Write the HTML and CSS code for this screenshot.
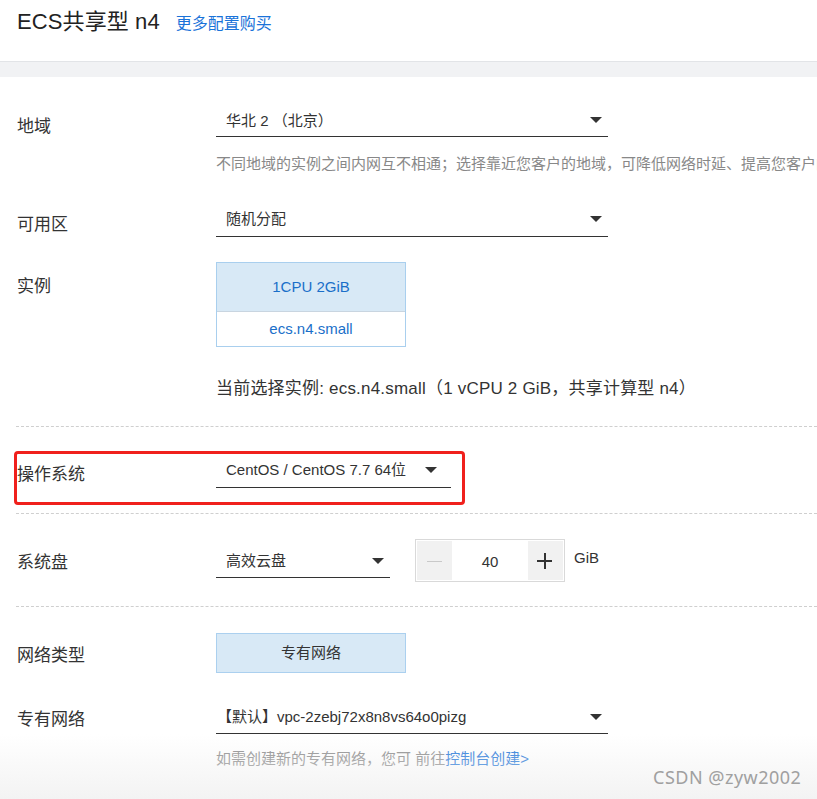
FILE: index.html
```html
<!DOCTYPE html>
<html lang="zh-CN">
<head>
<meta charset="utf-8">
<title>ECS共享型 n4</title>
<link rel="stylesheet" href="styles.css">
</head>
<body>
<div class="header">
  <h1 class="title">ECS共享型 n4</h1>
  <a class="more-link" href="#">更多配置购买</a>
</div>
<div class="band"></div>

<div class="form">
  <div class="row row-region">
    <div class="label">地域</div>
    <div class="field">
      <div class="select select-wide"><span>华北 2 （北京）</span><i class="caret"></i></div>
      <div class="hint">不同地域的实例之间内网互不相通；选择靠近您客户的地域，可降低网络时延、提高您客户的访问速度。</div>
    </div>
  </div>

  <div class="row row-zone">
    <div class="label label-zone">可用区</div>
    <div class="field">
      <div class="select select-wide select-zone"><span>随机分配</span><i class="caret"></i></div>
    </div>
  </div>

  <div class="row row-instance">
    <div class="label label-instance">实例</div>
    <div class="field">
      <div class="spec-card">
        <div class="spec-top">1CPU 2GiB</div>
        <div class="spec-bottom">ecs.n4.small</div>
      </div>
      <div class="current">当前选择实例: ecs.n4.small（1 vCPU 2 GiB，共享计算型 n4）</div>
    </div>
  </div>

  <div class="divider div-1"></div>

  <div class="row row-os">
    <div class="label label-os">操作系统</div>
    <div class="field">
      <div class="select select-os"><span>CentOS / CentOS 7.7 64位</span><i class="caret"></i></div>
    </div>
    <div class="highlight"></div>
  </div>

  <div class="divider div-2"></div>

  <div class="row row-disk">
    <div class="label label-disk">系统盘</div>
    <div class="field field-inline">
      <div class="select select-disk"><span>高效云盘</span><i class="caret"></i></div>
      <div class="stepper">
        <span class="step step-minus"><i class="minus-bar"></i></span>
        <span class="step-value">40</span>
        <span class="step step-plus"><i class="plus-h"></i><i class="plus-v"></i></span>
      </div>
      <span class="unit">GiB</span>
    </div>
  </div>

  <div class="divider div-3"></div>

  <div class="row row-nettype">
    <div class="label label-nettype">网络类型</div>
    <div class="field">
      <div class="net-btn">专有网络</div>
    </div>
  </div>

  <div class="row row-vpc">
    <div class="label label-vpc">专有网络</div>
    <div class="field">
      <div class="select select-wide select-vpc"><span>【默认】vpc-2zebj72x8n8vs64o0pizg</span><i class="caret"></i></div>
      <div class="hint hint-vpc">如需创建新的专有网络，您可 前往<a href="#" class="console-link">控制台创建&gt;</a></div>
    </div>
  </div>
</div>

<div class="fade"></div>
<div class="watermark">CSDN @zyw2002</div>
</body>
</html>
```

FILE: styles.css
```css
html, body {
  margin: 0;
  padding: 0;
  background: #fff;
  overflow: hidden;
}
body {
  width: 817px;
  height: 799px;
  font-family: "Liberation Sans", "Noto Sans CJK SC", sans-serif;
  color: #333;
  position: relative;
}
.header {
  height: 61px;
  display: flex;
  align-items: center;
  padding-left: 17px;
  box-sizing: border-box;
  padding-bottom: 17px;
}
.title {
  margin: 0;
  font-size: 22px;
  font-weight: normal;
  color: #222;
  line-height: 28px;
  letter-spacing: 0.1px;
}
.more-link {
  margin-left: 16px;
  font-size: 16px;
  color: #1a73d9;
  text-decoration: none;
  line-height: 28px;
  padding-top: 3px;
}
.band {
  height: 15px;
  background: #f1f2f4;
  border-top: 1px solid #e2e4e7;
}
.form {
  padding-left: 16px;
}
.row {
  display: flex;
  align-items: flex-start;
  position: relative;
}
.label {
  width: 200px;
  flex: none;
  font-size: 17px;
  line-height: 24px;
  color: #333;
  padding-left: 1px;
  box-sizing: border-box;
}
.field {
  flex: none;
}
.select {
  height: 32px;
  border-bottom: 1px solid #333;
  display: flex;
  align-items: center;
  justify-content: space-between;
  padding: 0 6px 0 10px;
  box-sizing: content-box;
  font-size: 15px;
  color: #333;
}
.select span {
  white-space: nowrap;
}
.select-wide {
  width: 376px;
}
.caret {
  display: block;
  width: 0;
  height: 0;
  border-left: 6px solid transparent;
  border-right: 6px solid transparent;
  border-top: 6px solid #333;
}
.hint {
  margin-top: 17px;
  font-size: 15px;
  line-height: 20px;
  color: #888;
  white-space: nowrap;
}
.row-region {
  margin-top: 27px;
}
.row-region .label {
  padding-top: 11px;
}
.row-region .select span {
  margin-top: -1px;
}
.row-zone {
  margin-top: 30px;
}
.label-zone {
  padding-top: 9px;
}
.select-zone span {
  margin-top: -6px;
}
.select-zone .caret {
  margin-top: -2px;
}
.row-instance {
  margin-top: 25px;
}
.label-instance {
  padding-top: 13px;
}
.spec-card {
  width: 188px;
  border: 1px solid #a9cfee;
  font-size: 15px;
  color: #1a6fc9;
  text-align: center;
}
.spec-top {
  height: 48px;
  line-height: 48px;
  background: #d8e9f6;
  border-bottom: 1px solid #c9d5e0;
}
.spec-bottom {
  height: 34px;
  line-height: 34px;
  background: #fff;
}
.current {
  margin-top: 30px;
  font-size: 17px;
  line-height: 24px;
  color: #333;
  white-space: nowrap;
  letter-spacing: 0.2px;
}
.divider {
  height: 0;
  border-top: 1px dashed #cfcfcf;
}
.div-1 {
  margin-top: 25px;
}
.row-os {
  margin-top: 28px;
}
.label-os {
  padding-top: 8px;
}
.select-os {
  width: 219px;
}
.select-os span {
  margin-top: -5px;
}
.select-os .caret {
  margin-right: 8px;
  margin-top: -2px;
}
.highlight {
  position: absolute;
  left: -2px;
  top: -4px;
  width: 445px;
  height: 48px;
  border: 3px solid #f0201c;
  border-radius: 4px;
  pointer-events: none;
}
.div-2 {
  margin-top: 25px;
}
.row-disk {
  margin-top: 25px;
}
.label-disk {
  padding-top: 12px;
}
.field-inline {
  display: flex;
  align-items: flex-start;
}
.select-disk {
  width: 158px;
  margin-top: 6px;
}
.select-disk span {
  margin-top: -3px;
}
.stepper {
  margin-left: 25px;
  width: 148px;
  height: 41px;
  border: 1px solid #d9d9d9;
  display: flex;
  align-items: stretch;
}
.step {
  width: 35px;
  background: #f1f1f1;
  position: relative;
  display: block;
  margin: 1px 0;
}
.step-minus {
  margin-left: 1px;
}
.step-plus {
  margin-right: 1px;
}
.minus-bar {
  position: absolute;
  left: 10px;
  top: 20px;
  width: 15px;
  height: 1px;
  background: #c9c9c9;
}
.plus-h {
  position: absolute;
  left: 9px;
  top: 19px;
  width: 15px;
  height: 2px;
  background: #333;
}
.plus-v {
  position: absolute;
  left: 16px;
  top: 12px;
  width: 2px;
  height: 16px;
  background: #333;
}
.step-value {
  flex: 1;
  text-align: center;
  font-size: 15px;
  line-height: 43px;
  color: #333;
}
.unit {
  margin-left: 9px;
  font-size: 15px;
  line-height: 20px;
  margin-top: 9px;
  color: #333;
}
.div-3 {
  margin-top: 24px;
}
.row-nettype {
  margin-top: 26px;
}
.label-nettype {
  padding-top: 11px;
}
.net-btn {
  width: 188px;
  height: 38px;
  line-height: 38px;
  border: 1px solid #abd0ef;
  background: #d8e9f6;
  text-align: center;
  font-size: 15px;
  color: #333;
}
.row-vpc {
  margin-top: 28px;
}
.label-vpc {
  padding-top: 7px;
}
.select-vpc {
  padding-left: 1px;
  width: 385px;
}
.select-vpc span {
  margin-top: -3px;
}
.hint-vpc {
  margin-top: 15px;
}
.console-link {
  color: #1a73d9;
  text-decoration: none;
}
.fade {
  position: absolute;
  left: 0;
  right: 0;
  bottom: 0;
  height: 65px;
  background: linear-gradient(to bottom, rgba(240,240,240,0), rgba(240,240,240,0.8));
  pointer-events: none;
}
.watermark {
  position: absolute;
  left: 653px;
  top: 765px;
  font-family: "Noto Sans", "Open Sans", sans-serif;
  font-size: 18px;
  line-height: 24px;
  letter-spacing: 0.5px;
  color: #a0a0a0;
  pointer-events: none;
}
```
